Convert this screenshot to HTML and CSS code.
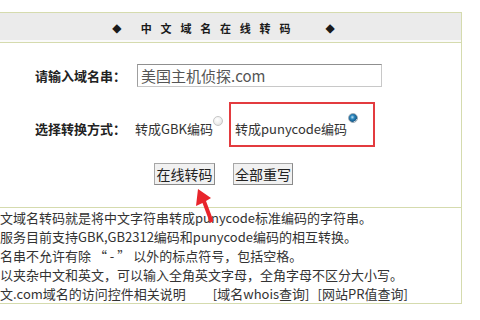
FILE: index.html
```html
<!DOCTYPE html>
<html lang="zh-CN">
<head>
<meta charset="utf-8">
<title>中文域名在线转码</title>
<link rel="stylesheet" href="styles.css">
</head>
<body>
<div class="panel">
  <div class="head">
    <span class="dia">◆</span><span class="title">中文域名在线转码</span><span class="dia">◆</span>
  </div>
  <div class="form">
    <div class="row r1">
      <span class="lbl">请输入域名串：</span>
      <div class="input">美国主机侦探.com</div>
    </div>
    <div class="row r2">
      <span class="lbl">选择转换方式：</span>
      <span class="opt gbk">转成GBK编码</span>
      <span class="radio"></span>
      <div class="hl">
        <span class="opt puny">转成punycode编码</span>
        <span class="radio on"></span>
      </div>
    </div>
    <div class="btns">
      <span class="btn">在线转码</span>
      <span class="btn b2">全部重写</span>
    </div>
  </div>
  <div class="info">
    <p>文域名转码就是将中文字符串转成punycode标准编码的字符串。</p>
    <p>服务目前支持GBK,GB2312编码和punycode编码的相互转换。</p>
    <p>名串不允许有除 “ - ” 以外的标点符号，包括空格。</p>
    <p>以夹杂中文和英文，可以输入全角英文字母，全角字母不区分大小写。</p>
    <p>文.com域名的访问控件相关说明<span class="lk l1">[域名whois查询]</span><span class="lk l2">[网站PR值查询]</span></p>
  </div>
</div>
<svg class="arrow" width="30" height="40" viewBox="190 186 30 40">
  <polygon fill="#e8252b" points="198,189 211,198 206,201 213.5,221 210,223 202.5,203 196,206"/>
</svg>
</body>
</html>
```
FILE: styles.css
```css
html, body {
  margin: 0;
  padding: 0;
  background: #fff;
}
body {
  width: 480px;
  height: 320px;
  overflow: hidden;
  position: relative;
  font-family: "Noto Sans CJK SC", "Liberation Sans", sans-serif;
  color: #333;
}
.panel {
  margin: 12px 0 0 -15px;
  width: 477px;
  box-sizing: border-box;
  border: 1px solid #d5dbae;
}
.head {
  height: 29px;
  background: #ebebeb;
  border-bottom: 1px solid #d5dbae;
  box-shadow: inset 0 -2px 0 #fafafa;
  display: flex;
  align-items: center;
  justify-content: center;
  color: #1a1a1a;
}
.dia {
  font-family: "DejaVu Sans", sans-serif;
  font-size: 12px;
  width: 10px;
  text-align: center;
  line-height: 12px;
}
.title {
  font-size: 11px;
  font-weight: bold;
  letter-spacing: 8.8px;
  margin: 0 26px 0 19px;
  line-height: 14px;
}
.form {
  padding: 21px 0 23px 49px;
  height: 120px;
}
.row {
  display: flex;
}
.r1 {
  align-items: center;
  height: 23px;
}
.lbl {
  font-size: 13px;
  font-weight: bold;
  color: #222;
  width: 91px;
  white-space: nowrap;
  line-height: 17px;
}
.input {
  margin-left: 11px;
  width: 245px;
  height: 23px;
  box-sizing: border-box;
  border: 1px solid #c8c8c8;
  border-top-color: #8f8f8f;
  border-left-color: #9f9f9f;
  font-size: 15px;
  line-height: 21px;
  padding-left: 3px;
  color: #555;
}
.r2 {
  margin-top: 15px;
  height: 45px;
  align-items: flex-start;
}
.r2 .lbl {
  margin-top: 18px;
}
.opt {
  font-size: 13px;
  line-height: 17px;
  color: #333;
  white-space: nowrap;
}
.gbk {
  margin: 18px 0 0 9px;
  width: 72px;
}
.radio {
  width: 10px;
  height: 10px;
  box-sizing: border-box;
  border-radius: 50%;
  border: 1px solid #c6c6c6;
  background: radial-gradient(circle at 40% 35%, #ffffff 0%, #eeeeee 55%, #d4d4d4 100%);
  margin: 14px 0 0 6px;
}
.hl {
  margin-left: 6px;
  height: 45px;
  box-sizing: border-box;
  border: 2px solid #e33b3f;
  padding: 0 15px 0 4px;
  display: flex;
  align-items: flex-start;
}
.puny {
  margin-top: 16px;
  width: 108px;
}
.radio.on {
  margin: 9px 0 0 5px;
  border-color: #9aa9b4;
  background: radial-gradient(circle at 42% 40%, #bfe3f5 0%, #2c86bd 30%, #145a8a 65%, #d8dde2 72%, #cfd4d8 100%);
}
.btns {
  margin: 16px 0 0 -49px;
  display: flex;
  justify-content: center;
  gap: 18px;
}
.btn {
  width: 61px;
  height: 22px;
  box-sizing: border-box;
  border: 1px solid #a7a7a7;
  border-right-color: #8a8a8a;
  border-bottom-color: #8a8a8a;
  background: #f1f1f1;
  font-size: 14px;
  line-height: 20px;
  text-align: center;
  color: #222;
}
.btn.b2 {
  width: 60px;
}
.info {
  border-top: 1px solid #d5dbae;
  padding: 0 0 0 14px;
  height: 95px;
}
.info p {
  margin: 0;
  font-size: 13px;
  line-height: 19px;
  white-space: nowrap;
  color: #333;
}
.lk {
  display: inline-block;
}
.l1 {
  margin-left: 27px;
}
.l2 {
  margin-left: 8px;
}
.arrow {
  position: absolute;
  left: 190px;
  top: 186px;
}
```
